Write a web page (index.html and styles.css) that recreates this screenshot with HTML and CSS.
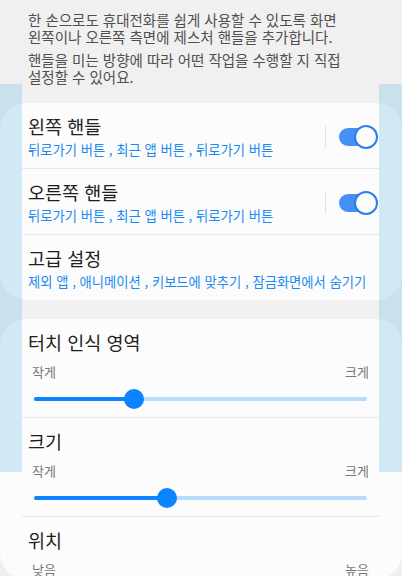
FILE: index.html
```html
<!DOCTYPE html>
<html lang="ko">
<head>
    <meta charset="UTF-8">
    <meta name="viewport" content="width=device-width, initial-scale=1.0">
    <title>한 손 조작 +</title>
    <link rel="stylesheet" href="styles.css">
</head>
<body>
    <div class="screen">

        <div class="intro">
            <p>한 손으로도 휴대전화를 쉽게 사용할 수 있도록 화면<br>왼쪽이나 오른쪽 측면에 제스처 핸들을 추가합니다.</p>
            <p>핸들을 미는 방향에 따라 어떤 작업을 수행할 지 직접<br>설정할 수 있어요.</p>
        </div>

        <div class="card">
            <div class="row">
                <div class="row-text">
                    <div class="title">왼쪽 핸들</div>
                    <div class="summary">뒤로가기 버튼 , 최근 앱 버튼 , 뒤로가기 버튼</div>
                </div>
                <div class="switch-wrap"><span class="switch"></span></div>
            </div>
            <div class="row">
                <div class="row-text">
                    <div class="title">오른쪽 핸들</div>
                    <div class="summary">뒤로가기 버튼 , 최근 앱 버튼 , 뒤로가기 버튼</div>
                </div>
                <div class="switch-wrap"><span class="switch"></span></div>
            </div>
            <div class="row">
                <div class="row-text">
                    <div class="title">고급 설정</div>
                    <div class="summary">제외 앱 , 애니메이션 , 키보드에 맞추기 , 잠금화면에서 숨기기</div>
                </div>
            </div>
        </div>

        <div class="card">
            <div class="row row-slider">
                <div class="title">터치 인식 영역</div>
                <div class="range-labels"><span>작게</span><span>크게</span></div>
                <div class="slider">
                    <div class="slider-fill" style="width: 30%"></div>
                    <span class="slider-thumb" style="left: 30%"></span>
                </div>
            </div>
            <div class="row row-slider">
                <div class="title">크기</div>
                <div class="range-labels"><span>작게</span><span>크게</span></div>
                <div class="slider">
                    <div class="slider-fill" style="width: 40%"></div>
                    <span class="slider-thumb" style="left: 40%"></span>
                </div>
            </div>
            <div class="row row-slider row-last">
                <div class="title">위치</div>
                <div class="range-labels"><span>낮음</span><span>높음</span></div>
            </div>
        </div>

        <!-- handle preview strips on both screen edges -->
        <div class="handle handle-left"></div>
        <div class="handle handle-right"></div>
    </div>
</body>
</html>
```

FILE: styles.css
```css
body {
    margin: 0;
    background-color: #f0f0f0;
    font-family: "Noto Sans CJK KR", "Noto Sans", sans-serif;
    overflow: hidden;
}

.screen {
    position: relative;
    width: 402px;
    height: 576px;
    overflow: hidden;
}

.intro {
    padding: 11px 28px 0 28px;
    font-size: 14.5px;
    line-height: 17px;
    color: #4f4f4f;
}

.intro p {
    margin: 0;
}

.intro p + p {
    margin-top: 6px;
}

.card {
    margin-top: 18px;
    padding: 0 22px;
    background-color: #fcfcfc;
    border-radius: 26px;
}

.card + .card {
    margin-top: 19px;
}

.row {
    display: flex;
    align-items: center;
    padding: 12px 3px 9px 6px;
    border-bottom: 1px solid #e8e8e8;
}

.row:last-child {
    border-bottom: none;
}

.row-text {
    flex: 1;
    min-width: 0;
}

.title {
    font-size: 18.5px;
    line-height: 22px;
    color: #1e1e1e;
}

.summary {
    margin-top: 4px;
    font-size: 13.3px;
    line-height: 18px;
    color: #1a8af2;
    white-space: nowrap;
}

.switch-wrap {
    display: flex;
    align-items: center;
    height: 22px;
    padding-left: 13px;
    border-left: 1px solid #e2e2e2;
}

.switch {
    position: relative;
    display: block;
    width: 38px;
    height: 18px;
    border-radius: 9px;
    background-color: #4590f5;
}

.switch::after {
    content: "";
    position: absolute;
    right: -1px;
    top: -3px;
    width: 24px;
    height: 24px;
    box-sizing: border-box;
    border: 2px solid #2a7fea;
    border-radius: 50%;
    background-color: #fcfcfc;
}

.row-slider {
    display: block;
    padding: 12px 5px 8px 6px;
}

.row-last {
    padding-bottom: 1px;
}

.range-labels {
    display: flex;
    justify-content: space-between;
    margin-top: 10px;
    padding: 0 6px 0 4px;
    font-size: 13px;
    line-height: 17px;
    color: #767676;
}

.slider {
    position: relative;
    height: 20px;
    margin: 9px 8px 0 6px;
}

.slider::before {
    content: "";
    position: absolute;
    left: 0;
    right: 0;
    top: 8px;
    height: 4px;
    border-radius: 2px;
    background-color: #b6dbfb;
}

.slider-fill {
    position: absolute;
    left: 0;
    top: 8px;
    height: 4px;
    border-radius: 2px;
    background-color: #0a84ff;
}

.slider-thumb {
    position: absolute;
    top: 0;
    width: 20px;
    height: 20px;
    margin-left: -10px;
    border-radius: 50%;
    background-color: #0a84ff;
}

.handle {
    position: absolute;
    top: 84px;
    height: 388px;
    background-color: rgba(119, 194, 231, 0.33);
}

.handle-left {
    left: 0;
    width: 22px;
}

.handle-right {
    left: 379px;
    width: 23px;
}
```
